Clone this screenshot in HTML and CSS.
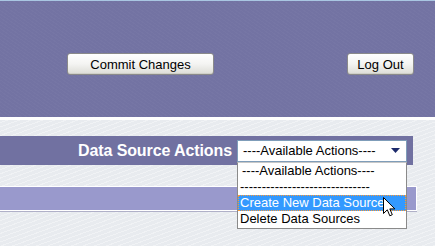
FILE: index.html
```html
<!DOCTYPE html>
<html>
<head>
<meta charset="utf-8">
<link rel="stylesheet" href="styles.css">
</head>
<body>
<div class="top">
  <div class="top-buttons">
    <button class="btn btn-commit">Commit Changes</button>
    <button class="btn btn-logout">Log Out</button>
  </div>
</div>
<div class="content">
  <div class="action-row">
    <span class="action-label">Data Source Actions</span>
    <div class="select-wrap">
      <div class="select">
        <span>----Available Actions----</span>
        <svg class="arrow" width="9" height="5" viewBox="0 0 9 5"><path d="M0 0H9L4.5 5Z" fill="#1c2a6b"/></svg>
      </div>
      <ul class="options">
        <li>----Available Actions----</li>
        <li>------------------------------</li>
        <li class="selected">Create New Data Source</li>
        <li>Delete Data Sources</li>
      </ul>
      <svg class="cursor" width="13" height="20" viewBox="0 0 13 20"><path d="M0.5 0.5V16.5L4.3 12.8L6.8 18.8L9.3 17.7L6.8 11.9H11.8Z" fill="#fff" stroke="#000" stroke-width="1" stroke-linejoin="miter"/></svg>
    </div>
  </div>
  <div class="bar"></div>
</div>
</body>
</html>
```
FILE: styles.css
```css
html, body {
  margin: 0;
  padding: 0;
}
body {
  width: 435px;
  height: 246px;
  overflow: hidden;
  font-family: "Liberation Sans", Arial, sans-serif;
  background: #e8ebef;
}
.top {
  border-top: 1px solid #a9c6e2;
  height: 116px;
  background-color: #7373a3;
  background-image: repeating-linear-gradient(35deg, rgba(255,255,255,0.025) 0 1px, transparent 1px 3px);
  border-bottom: 3px solid #ffffff;
}
.top-buttons {
  display: flex;
  padding: 52px 0 0 67px;
}
.btn {
  font-family: "Liberation Sans", Arial, sans-serif;
  font-size: 13px;
  color: #000;
  height: 22px;
  padding: 0;
  border: 1px solid #8a8a8a;
  border-radius: 3px;
  background: linear-gradient(#ffffff 0%, #f4f4f2 50%, #dcdcd6 100%);
  box-shadow: inset 0 -1px 0 #cfcfc8;
}
.btn-commit {
  width: 147px;
}
.btn-logout {
  width: 67px;
  margin-left: 133px;
}
.content {
  background-color: #e8ebef;
  background-image: repeating-linear-gradient(-20deg, rgba(255,255,255,0.35) 0 1px, transparent 1px 4px);
  padding-top: 16px;
  height: 110px;
}
.action-row {
  width: 413px;
  height: 29px;
  background: #7171a1;
  display: flex;
  justify-content: flex-end;
  align-items: center;
}
.action-label {
  color: #ffffff;
  font-weight: bold;
  font-size: 16px;
  letter-spacing: -0.1px;
  margin-right: 5px;
}
.select-wrap {
  position: relative;
  width: 170px;
  margin-right: 6px;
}
.select {
  box-sizing: border-box;
  height: 22px;
  border: 1px solid #7f9db9;
  background: #fff;
  font-size: 13px;
  display: flex;
  align-items: center;
  justify-content: space-between;
  padding: 0 6px 0 5px;
  color: #000;
}
.options {
  position: absolute;
  left: 0;
  top: 22px;
  width: 170px;
  box-sizing: border-box;
  margin: 0;
  padding: 0 0 1px;
  list-style: none;
  background: #fff;
  border: 1px solid #8a8a8a;
  border-top: 1px solid #c8c8c8;
  z-index: 2;
  font-size: 13px;
}
.options li {
  height: 16px;
  line-height: 16px;
  padding-left: 2px;
  color: #000;
  white-space: nowrap;
}
.options li:first-child {
  padding-left: 4px;
}
.options li.selected {
  background: #3399ff;
  color: #fff;
  outline: 1px dotted #ff9933;
  outline-offset: -1px;
}
.cursor {
  position: absolute;
  left: 146px;
  top: 57px;
  z-index: 3;
}
.bar {
  margin-top: 21px;
  width: 417px;
  height: 25px;
  box-sizing: border-box;
  background: #9999cc;
  border: 1px solid #ffffff;
  border-left: none;
  box-shadow: 0 1px 0 #b0b0c8;
}
```
